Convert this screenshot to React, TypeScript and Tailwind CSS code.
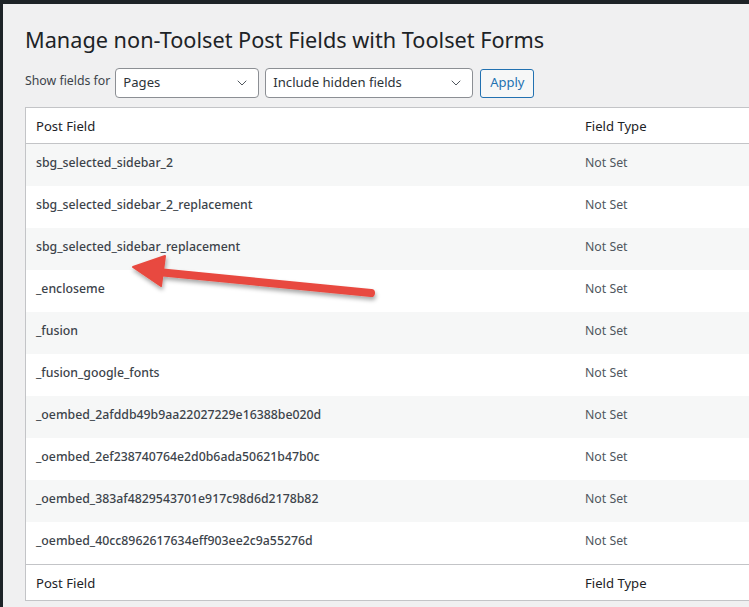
import { ChevronDown } from 'lucide-react';

const fields = [
  'sbg_selected_sidebar_2',
  'sbg_selected_sidebar_2_replacement',
  'sbg_selected_sidebar_replacement',
  '_encloseme',
  '_fusion',
  '_fusion_google_fonts',
  '_oembed_2afddb49b9aa22027229e16388be020d',
  '_oembed_2ef238740764e2d0b6ada50621b47b0c',
  '_oembed_383af4829543701e917c98d6d2178b82',
  '_oembed_40cc8962617634eff903ee2c9a55276d',
];

function Select({ label, width }: { label: string; width: string }) {
  return (
    <div
      className={`${width} h-[30px] flex items-center justify-between bg-white border border-[#8c8f94] rounded-[4px] pl-[7px] pr-[8px] text-[13.1px] text-[#2c3338]`}
    >
      <span>{label}</span>
      <ChevronDown className="w-4 h-4 text-[#50575e]" strokeWidth={1.5} />
    </div>
  );
}

function Pointer() {
  return (
    <svg className="absolute left-0 top-0 pointer-events-none" width="749" height="607">
      <defs>
        <filter id="drop" x="-20%" y="-50%" width="140%" height="200%">
          <feDropShadow dx="1" dy="3" stdDeviation="2" floodColor="#000" floodOpacity="0.35" />
        </filter>
      </defs>
      <g filter="url(#drop)" fill="#e8493f" stroke="#e8493f">
        <line x1="158" y1="272" x2="371" y2="293" strokeWidth="8" strokeLinecap="round" />
        <polygon points="133,267 165,256 161,286" strokeWidth="2" strokeLinejoin="round" />
      </g>
    </svg>
  );
}

export default function App() {
  return (
    <div
      className="relative w-[749px] h-[607px] overflow-hidden bg-[#1d2327] pt-[4px] pl-[3px]"
      style={{ fontFamily: '"Noto Sans", "Open Sans", sans-serif' }}
    >
      <div className="h-full bg-[#f0f0f1] pl-[22px]">
        <h1 className="pt-[22px] text-[21.7px] leading-[28px] text-[#1d2327] font-normal">
          Manage non-Toolset Post Fields with Toolset Forms
        </h1>

        {/* filter bar */}
        <div className="mt-[14px] flex items-center gap-[6px]">
          <span className="text-[12.3px] text-[#3c434a] mr-[-1px] -mt-[4px]">Show fields for</span>
          <Select label="Pages" width="w-[144px]" />
          <Select label="Include hidden fields" width="w-[208px]" />
          <button className="h-[29px] w-[54px] ml-[1px] text-[13px] text-[#2271b1] border border-[#2271b1] rounded-[3px] bg-[#f6f7f7]">
            Apply
          </button>
        </div>

        {/* fields table */}
        <div className="mt-[9px] w-[760px] border border-[#c3c4c7] bg-white">
          <div className="h-[36px] pt-[3px] flex items-center border-b border-[#c3c4c7] text-[13.1px] text-[#1d2327]">
            <div className="w-[559px] pl-[10px]">Post Field</div>
            <div>Field Type</div>
          </div>
          {fields.map((name, i) => (
            <div
              key={name}
              className={`h-[42px] flex items-center text-[12.3px] text-[#50575e] pb-[3px] ${i % 2 === 0 ? 'bg-[#f6f7f7]' : 'bg-white'}`}
            >
              <div className="w-[559px] pl-[10px] font-medium text-[#3c434a]">{name}</div>
              <div>Not Set</div>
            </div>
          ))}
          <div className="h-[36px] pt-[3px] flex items-center border-t border-[#c3c4c7] text-[13.1px] text-[#1d2327]">
            <div className="w-[559px] pl-[10px]">Post Field</div>
            <div>Field Type</div>
          </div>
        </div>
      </div>
      <Pointer />
    </div>
  );
}
